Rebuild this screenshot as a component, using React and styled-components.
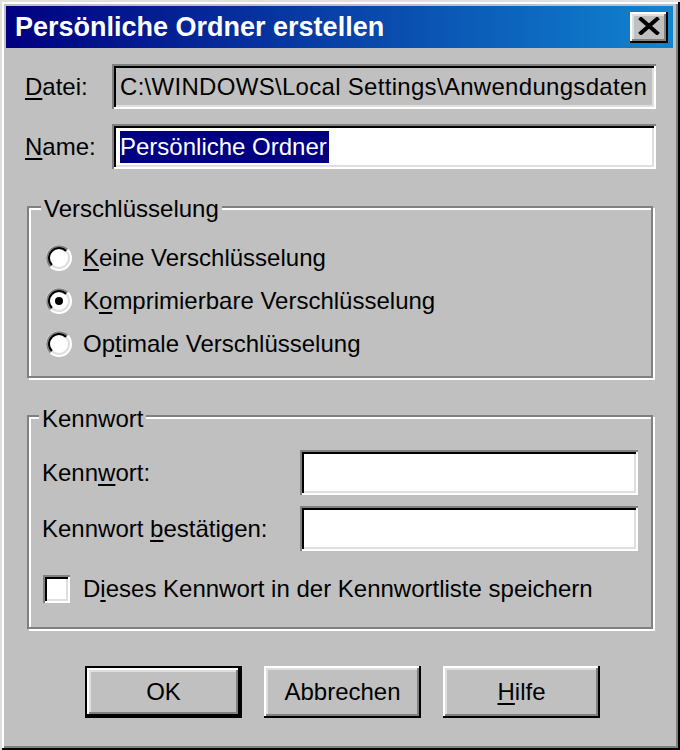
import React from "react";
import styled, { createGlobalStyle, css } from "styled-components";

const GlobalStyle = createGlobalStyle`
  html, body {
    margin: 0;
    padding: 0;
    background: #c0c0c0;
  }
  u {
    text-decoration-thickness: 2px;
    text-underline-offset: 3px;
  }
`;

const raised = css`
  box-shadow: inset -2px -2px #000, inset 2px 2px #fff, inset -4px -4px #808080,
    inset 4px 4px #dfdfdf;
`;

const sunken = css`
  box-shadow: inset 2px 2px #808080, inset -2px -2px #fff, inset 4px 4px #000,
    inset -4px -4px #dfdfdf;
`;

const Window = styled.div`
  width: 680px;
  height: 750px;
  box-sizing: border-box;
  padding: 6px 7px 0 6px;
  background: #c0c0c0;
  box-shadow: inset 2px 2px #dfdfdf, inset -2px -2px #000, inset 4px 4px #fff,
    inset -4px -4px #808080;
  display: flex;
  flex-direction: column;
  font-family: "Liberation Sans", Arial, sans-serif;
  font-size: 24px;
  color: #000;
`;

const TitleBar = styled.div`
  height: 42px;
  display: flex;
  align-items: center;
  justify-content: space-between;
  padding: 0 5px 0 9px;
  background: linear-gradient(90deg, #000080 0%, #1084d0 100%);
`;

const Title = styled.span`
  color: #fff;
  font-weight: bold;
  font-size: 27px;
`;

const CloseButton = styled.div`
  width: 38px;
  height: 31px;
  box-sizing: border-box;
  background: #c0c0c0;
  ${raised};
  display: flex;
  align-items: center;
  justify-content: center;
  padding-bottom: 2px;
`;

const Content = styled.div`
  display: flex;
  flex-direction: column;
  padding: 0 17px 0 19px;
`;

const FieldRow = styled.div`
  display: grid;
  grid-template-columns: 87px 1fr;
  align-items: center;
  margin-top: ${(p) => p.$top}px;
`;

const Field = styled.div`
  height: 45px;
  box-sizing: border-box;
  padding: 0 4px 0 8px;
  background: ${(p) => p.$bg || "#fff"};
  letter-spacing: ${(p) => p.$spacing || 0}px;
  ${sunken};
  display: flex;
  align-items: center;
  white-space: nowrap;
  overflow: hidden;
`;

const Selected = styled.span`
  background: #000080;
  color: #fff;
  line-height: 32px;
  padding-right: 2px;
`;

const Group = styled.div`
  position: relative;
  box-sizing: border-box;
  height: ${(p) => p.$h}px;
  margin: 37px 3px 0 2px;
  border: 2px solid #808080;
  box-shadow: inset 2px 2px #fff, 2px 2px #fff;
  padding: ${(p) => p.$pad};
`;

const Legend = styled.span`
  position: absolute;
  top: ${(p) => p.$top}px;
  left: ${(p) => p.$left}px;
  padding: 0 3px;
  line-height: 28px;
  background: #c0c0c0;
`;

const OptionRow = styled.div`
  height: 43px;
  display: flex;
  align-items: center;
  gap: 11px;
`;

const InputRow = styled.div`
  display: grid;
  grid-template-columns: 258px 338px;
  align-items: center;
  margin-top: ${(p) => p.$top}px;
`;

const CheckRow = styled.div`
  display: flex;
  align-items: center;
  gap: 13px;
  margin-top: 24px;
  padding-left: 1px;
`;

const CheckBox = styled.div`
  width: 27px;
  height: 28px;
  box-sizing: border-box;
  background: #fff;
  ${sunken};
`;

const ButtonRow = styled.div`
  display: flex;
  gap: 22px;
  margin-top: 37px;
  padding-left: 60px;
`;

const Button = styled.div`
  width: 157px;
  height: 52px;
  box-sizing: border-box;
  background: #c0c0c0;
  border: ${(p) => (p.$default ? "2px solid #000" : "none")};
  ${raised};
  display: flex;
  align-items: center;
  justify-content: center;
`;

function Radio({ checked }) {
  return (
    <svg width="26" height="26" viewBox="0 0 26 26">
      <circle cx="13" cy="13" r="13" fill="#fff" />
      <path d="M3.81 22.19 A13 13 0 0 1 22.19 3.81 Z" fill="#808080" />
      <circle cx="13" cy="13" r="11" fill="#dfdfdf" />
      <path d="M5.22 20.78 A11 11 0 0 1 20.78 5.22 Z" fill="#000" />
      <circle cx="13" cy="13" r="9" fill="#fff" />
      {checked && <circle cx="13" cy="13" r="4" fill="#000" />}
    </svg>
  );
}

const options = [
  { pre: "", key: "K", post: "eine Verschlüsselung", checked: false },
  { pre: "K", key: "o", post: "mprimierbare Verschlüsselung", checked: true },
  { pre: "Op", key: "t", post: "imale Verschlüsselung", checked: false },
];

export default function App() {
  return (
    <>
      <GlobalStyle />
      <Window>
        <TitleBar>
          <Title>Persönliche Ordner erstellen</Title>
          <CloseButton>
            <svg width="22" height="18" viewBox="0 0 22 18">
              <path
                d="M3 2 L19 16 M19 2 L3 16"
                stroke="#000"
                strokeWidth="4"
                strokeLinecap="square"
              />
            </svg>
          </CloseButton>
        </TitleBar>
        <Content>
          <FieldRow $top={16}>
            <span>
              <u>D</u>atei:
            </span>
            <Field $bg="#c0c0c0" $spacing={0.3}>
              C:\WINDOWS\Local Settings\Anwendungsdaten
            </Field>
          </FieldRow>
          <FieldRow $top={15}>
            <span>
              <u>N</u>ame:
            </span>
            <Field>
              <Selected>Persönliche Ordner</Selected>
            </Field>
          </FieldRow>

          <Group $h={172} $pad="28px 0 0 17px">
            <Legend $top={-13} $left={12}>
              Verschlüsselung
            </Legend>
            {options.map((o) => (
              <OptionRow key={o.post}>
                <Radio checked={o.checked} />
                <span>
                  {o.pre}
                  <u>{o.key}</u>
                  {o.post}
                </span>
              </OptionRow>
            ))}
          </Group>

          <Group $h={214} $pad="33px 13px 0 13px">
            <Legend $top={-12} $left={10}>
              Kennwort
            </Legend>
            <InputRow $top={0}>
              <span>
                Kenn<u>w</u>ort:
              </span>
              <Field />
            </InputRow>
            <InputRow $top={11}>
              <span>
                Kennwort <u>b</u>estätigen:
              </span>
              <Field />
            </InputRow>
            <CheckRow>
              <CheckBox />
              <span>
                D<u>i</u>eses Kennwort in der Kennwortliste speichern
              </span>
            </CheckRow>
          </Group>

          <ButtonRow>
            <Button $default>OK</Button>
            <Button>Abbrechen</Button>
            <Button>
              <span>
                <u>H</u>ilfe
              </span>
            </Button>
          </ButtonRow>
        </Content>
      </Window>
    </>
  );
}
